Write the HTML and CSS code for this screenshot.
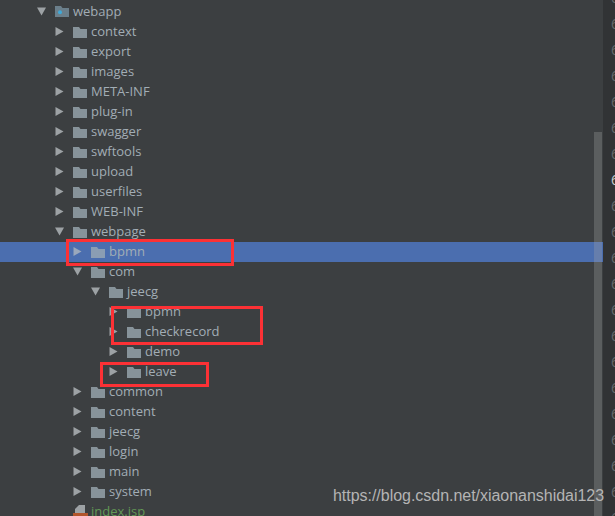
FILE: index.html
```html
<!DOCTYPE html>
<html lang="en">
<head>
<meta charset="utf-8">
<title>Project tree</title>
<link rel="stylesheet" href="styles.css">
</head>
<body>
<svg class="defs" width="0" height="0" aria-hidden="true">
  <symbol id="folder" viewBox="0 0 14 11"><path d="M0 0H6L7.5 2H14V11H0Z"/></symbol>
  <symbol id="module" viewBox="0 0 14 11"><path d="M0 0H6L7.5 2H14V11H0Z"/><circle cx="5" cy="6.2" r="2" fill="#3fa9d8"/></symbol>
  <symbol id="open" viewBox="0 0 9 9"><path d="M0 .5H9L4.5 8.5Z"/></symbol>
  <symbol id="closed" viewBox="0 0 9 9"><path d="M.5 0L8.5 4.5L.5 9Z"/></symbol>
</svg>
<main class="tree">
  <div class="row l0"><svg class="arrow"><use href="#open"/></svg><svg class="folder module"><use href="#module"/></svg><span>webapp</span></div>
  <div class="row l1"><svg class="arrow"><use href="#closed"/></svg><svg class="folder"><use href="#folder"/></svg><span>context</span></div>
  <div class="row l1"><svg class="arrow"><use href="#closed"/></svg><svg class="folder"><use href="#folder"/></svg><span>export</span></div>
  <div class="row l1"><svg class="arrow"><use href="#closed"/></svg><svg class="folder"><use href="#folder"/></svg><span>images</span></div>
  <div class="row l1"><svg class="arrow"><use href="#closed"/></svg><svg class="folder"><use href="#folder"/></svg><span>META-INF</span></div>
  <div class="row l1"><svg class="arrow"><use href="#closed"/></svg><svg class="folder"><use href="#folder"/></svg><span>plug-in</span></div>
  <div class="row l1"><svg class="arrow"><use href="#closed"/></svg><svg class="folder"><use href="#folder"/></svg><span>swagger</span></div>
  <div class="row l1"><svg class="arrow"><use href="#closed"/></svg><svg class="folder"><use href="#folder"/></svg><span>swftools</span></div>
  <div class="row l1"><svg class="arrow"><use href="#closed"/></svg><svg class="folder"><use href="#folder"/></svg><span>upload</span></div>
  <div class="row l1"><svg class="arrow"><use href="#closed"/></svg><svg class="folder"><use href="#folder"/></svg><span>userfiles</span></div>
  <div class="row l1"><svg class="arrow"><use href="#closed"/></svg><svg class="folder"><use href="#folder"/></svg><span>WEB-INF</span></div>
  <div class="row l1"><svg class="arrow"><use href="#open"/></svg><svg class="folder"><use href="#folder"/></svg><span>webpage</span></div>
  <div class="row l2 selected"><svg class="arrow"><use href="#closed"/></svg><svg class="folder"><use href="#folder"/></svg><span>bpmn</span></div>
  <div class="row l2"><svg class="arrow"><use href="#open"/></svg><svg class="folder"><use href="#folder"/></svg><span>com</span></div>
  <div class="row l3"><svg class="arrow"><use href="#open"/></svg><svg class="folder"><use href="#folder"/></svg><span>jeecg</span></div>
  <div class="row l4"><svg class="arrow"><use href="#closed"/></svg><svg class="folder"><use href="#folder"/></svg><span>bpmn</span></div>
  <div class="row l4"><svg class="arrow"><use href="#closed"/></svg><svg class="folder"><use href="#folder"/></svg><span>checkrecord</span></div>
  <div class="row l4"><svg class="arrow"><use href="#closed"/></svg><svg class="folder"><use href="#folder"/></svg><span>demo</span></div>
  <div class="row l4"><svg class="arrow"><use href="#closed"/></svg><svg class="folder"><use href="#folder"/></svg><span>leave</span></div>
  <div class="row l2"><svg class="arrow"><use href="#closed"/></svg><svg class="folder"><use href="#folder"/></svg><span>common</span></div>
  <div class="row l2"><svg class="arrow"><use href="#closed"/></svg><svg class="folder"><use href="#folder"/></svg><span>content</span></div>
  <div class="row l2"><svg class="arrow"><use href="#closed"/></svg><svg class="folder"><use href="#folder"/></svg><span>jeecg</span></div>
  <div class="row l2"><svg class="arrow"><use href="#closed"/></svg><svg class="folder"><use href="#folder"/></svg><span>login</span></div>
  <div class="row l2"><svg class="arrow"><use href="#closed"/></svg><svg class="folder"><use href="#folder"/></svg><span>main</span></div>
  <div class="row l2"><svg class="arrow"><use href="#closed"/></svg><svg class="folder"><use href="#folder"/></svg><span>system</span></div>
  <div class="row file"><svg class="jsp" viewBox="0 0 15 14"><path d="M6 0H12V8H2V4Z" fill="#9da2a5"/><rect x="0" y="8" width="15" height="6" fill="#b2552c"/></svg><span>index.jsp</span></div>
</main>
<div class="gutter" aria-hidden="true">
  <span>6</span><span>6</span><span>6</span><span>6</span><span>6</span><span>6</span><span>6</span><span class="hot">6</span><span>6</span><span>6</span><span>6</span><span>6</span><span>6</span><span>6</span><span>6</span><span>6</span><span>6</span><span>6</span><span>6</span><span>6</span><span>6</span>
</div>
<div class="scrollbar"></div>
<div class="mark m1"></div>
<div class="mark m2"></div>
<div class="mark m3"></div>
<div class="watermark">https://blog.csdn.net/xiaonanshidai123</div>
</body>
</html>
```
FILE: styles.css
```css
html, body { margin: 0; padding: 0; }
body {
  width: 615px; height: 516px; overflow: hidden; position: relative;
  background: #3c3f41; display: flex;
  font-family: "Open Sans", "Noto Sans", sans-serif;
}
.defs { position: absolute; }
.tree { width: 603px; padding-top: 2px; flex: none; }
.row {
  height: 20px; display: flex; align-items: center;
  font-size: 13px; color: #a2adb5;
  white-space: nowrap;
}
.row span { margin: 0 0 2px 4px; }
.l0 { padding-left: 37px; }
.l1 { padding-left: 55px; }
.l2 { padding-left: 73px; }
.l3 { padding-left: 91px; }
.l4 { padding-left: 109px; }
.selected { background: #4b6eaf; }
.arrow { width: 9px; height: 9px; flex: none; margin: 0 9px 1px 0; fill: #9da2a5; }
.folder { width: 14px; height: 11px; flex: none; fill: #87939a; }
.module { fill: #6b7f8b; margin-bottom: 1px; }
.selected .arrow { fill: #9aa8bc; }
.selected .folder { fill: #8a9db3; }
.file { color: #629755; padding-left: 73px; }
.jsp { width: 15px; height: 14px; flex: none; }
.file span { margin-left: 3px; }
.gutter {
  flex: 1; background: #313335; display: flex; flex-direction: column;
  overflow: hidden;
}
.gutter span {
  flex: none; height: 26px; font-size: 14px; line-height: 26px; color: #66696c; margin-left: 8px;
}
.gutter span:first-child { margin-top: -15px; }
.gutter .hot { color: #c9cccd; }
.scrollbar {
  position: absolute; left: 594px; top: 132px; width: 8px; height: 384px;
  background: rgba(166,166,166,.3);
}
.mark { position: absolute; border: 3px solid #fc3135; box-sizing: border-box; }
.m1 { left: 66px; top: 239px; width: 168px; height: 27px; }
.m2 { left: 111px; top: 306px; width: 152px; height: 39px; }
.m3 { left: 100px; top: 362px; width: 109px; height: 25px; }
.watermark {
  position: absolute; left: 333px; top: 487px;
  font-family: "Liberation Sans", Arial, sans-serif; font-size: 16px; letter-spacing: -.03px; color: #b4b4b4;
  white-space: nowrap;
}
```
